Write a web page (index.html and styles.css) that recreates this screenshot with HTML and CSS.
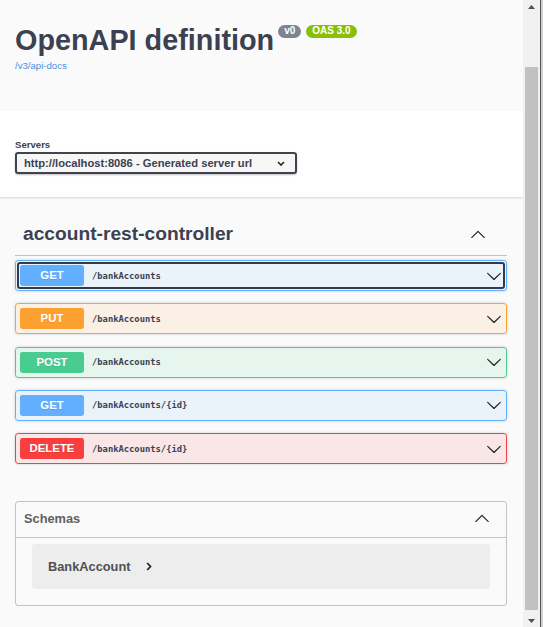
FILE: index.html
```html
<!DOCTYPE html>
<html lang="en">
<head>
<meta charset="utf-8">
<title>Swagger UI</title>
<link rel="stylesheet" href="styles.css">
</head>
<body>
<div class="app">
  <main class="page">
    <section class="info">
      <div class="title-row">
        <h2 class="title">OpenAPI definition</h2>
        <span class="badge badge-version">v0</span>
        <span class="badge badge-oas">OAS 3.0</span>
      </div>
      <a class="spec-link" href="#">/v3/api-docs</a>
    </section>

    <section class="scheme-container">
      <span class="servers-title">Servers</span>
      <div class="select">
        <span>http://localhost:8086 - Generated server url</span>
        <svg class="select-arrow" width="8" height="5" viewBox="0 0 8 5"><polyline points="1,1 4,4 7,1" fill="none" stroke="#222" stroke-width="1.6"/></svg>
      </div>
    </section>

    <section class="tag-section">
      <h3 class="tag">
        <span class="tag-name">account-rest-controller</span>
        <svg class="tag-arrow" width="16" height="16" viewBox="0 0 20 20"><path d="M17.418 14.908c.272.268.709.268.979 0s.271-.701 0-.969l-7.908-7.83c-.27-.268-.707-.268-.979 0l-7.908 7.83c-.27.268-.27.701 0 .969.271.268.709.268.979 0L10 7.767l7.418 7.141z" fill="#222"/></svg>
      </h3>

      <div class="opblock opblock-get">
        <div class="summary focused">
          <span class="method">GET</span>
          <span class="path">/bankAccounts</span>
          <svg class="op-arrow" width="16" height="16" viewBox="0 0 20 20"><path d="M17.418 6.109c.272-.268.709-.268.979 0s.271.701 0 .969l-7.908 7.83c-.27.268-.707.268-.979 0l-7.908-7.830c-.27-.268-.27-.701 0-.969.271-.268.709-.268.979 0L10 13.25l7.418-7.141z" fill="#222"/></svg>
        </div>
      </div>

      <div class="opblock opblock-put">
        <div class="summary">
          <span class="method">PUT</span>
          <span class="path">/bankAccounts</span>
          <svg class="op-arrow" width="16" height="16" viewBox="0 0 20 20"><path d="M17.418 6.109c.272-.268.709-.268.979 0s.271.701 0 .969l-7.908 7.83c-.27.268-.707.268-.979 0l-7.908-7.83c-.27-.268-.27-.701 0-.969.271-.268.709-.268.979 0L10 13.25l7.418-7.141z" fill="#222"/></svg>
        </div>
      </div>

      <div class="opblock opblock-post">
        <div class="summary">
          <span class="method">POST</span>
          <span class="path">/bankAccounts</span>
          <svg class="op-arrow" width="16" height="16" viewBox="0 0 20 20"><path d="M17.418 6.109c.272-.268.709-.268.979 0s.271.701 0 .969l-7.908 7.83c-.27.268-.707.268-.979 0l-7.908-7.83c-.27-.268-.27-.701 0-.969.271-.268.709-.268.979 0L10 13.25l7.418-7.141z" fill="#222"/></svg>
        </div>
      </div>

      <div class="opblock opblock-get">
        <div class="summary">
          <span class="method">GET</span>
          <span class="path">/bankAccounts/{id}</span>
          <svg class="op-arrow" width="16" height="16" viewBox="0 0 20 20"><path d="M17.418 6.109c.272-.268.709-.268.979 0s.271.701 0 .969l-7.908 7.83c-.27.268-.707.268-.979 0l-7.908-7.83c-.27-.268-.27-.701 0-.969.271-.268.709-.268.979 0L10 13.25l7.418-7.141z" fill="#222"/></svg>
        </div>
      </div>

      <div class="opblock opblock-delete">
        <div class="summary">
          <span class="method">DELETE</span>
          <span class="path">/bankAccounts/{id}</span>
          <svg class="op-arrow" width="16" height="16" viewBox="0 0 20 20"><path d="M17.418 6.109c.272-.268.709-.268.979 0s.271.701 0 .969l-7.908 7.83c-.27.268-.707.268-.979 0l-7.908-7.83c-.27-.268-.27-.701 0-.969.271-.268.709-.268.979 0L10 13.25l7.418-7.141z" fill="#222"/></svg>
        </div>
      </div>
    </section>

    <section class="models-wrap">
      <div class="models">
        <h4 class="models-title">
          <span>Schemas</span>
          <svg width="16" height="16" viewBox="0 0 20 20"><path d="M17.418 14.908c.272.268.709.268.979 0s.271-.701 0-.969l-7.908-7.83c-.27-.268-.707-.268-.979 0l-7.908 7.83c-.27.268-.27.701 0 .969.271.268.709.268.979 0L10 7.767l7.418 7.141z" fill="#222"/></svg>
        </h4>
        <div class="model-container">
          <span class="model-title">BankAccount</span>
          <svg class="model-toggle" width="6" height="9" viewBox="0 0 6 9"><polyline points="1.2,1 4.5,4.5 1.2,8" fill="none" stroke="#222" stroke-width="1.7"/></svg>
        </div>
      </div>
    </section>
  </main>

  <div class="scrollbar">
    <div class="sb-btn sb-up"><svg width="7" height="4" viewBox="0 0 7 4"><polygon points="0,4 3.5,0 7,4" fill="#505050"/></svg></div>
    <div class="sb-track"><div class="sb-thumb"></div></div>
    <div class="sb-btn sb-down"><svg width="7" height="4" viewBox="0 0 7 4"><polygon points="0,0 7,0 3.5,4" fill="#505050"/></svg></div>
  </div>
  <div class="edge"></div>
</div>
</body>
</html>
```

FILE: styles.css
```css
* { box-sizing: border-box; }

html, body {
  margin: 0;
  padding: 0;
}

body {
  background: #fafafa;
  font-family: "Liberation Sans", Arial, sans-serif;
  color: #3b4151;
  height: 627px;
  overflow: hidden;
}

.app {
  display: flex;
  height: 627px;
}

.page {
  width: 523px;
  flex: none;
  overflow: hidden;
}

/* info header */
.info {
  height: 111px;
  padding: 22px 16px 0 15px;
}

.title-row {
  display: flex;
  align-items: flex-start;
}

.title {
  margin: 0;
  font-size: 28.8px;
  line-height: 36px;
  font-weight: 700;
  color: #3b4151;
}

.badge {
  margin-top: 3px;
  margin-left: 5px;
  height: 12.5px;
  line-height: 12.5px;
  padding: 0 6px;
  border-radius: 7px;
  font-size: 10px;
  font-weight: 700;
  color: #fff;
}

.badge-version {
  margin-left: 4px;
  background: #7d8492;
}

.badge-oas {
  background: #89bf04;
}

.spec-link {
  display: block;
  margin-top: 2px;
  font-size: 9.6px;
  line-height: 12px;
  color: #4990e2;
  text-decoration: none;
}

/* servers */
.scheme-container {
  background: #fff;
  box-shadow: 0 1px 2px 0 rgba(0, 0, 0, 0.15);
  padding: 28px 16px 23px 15px;
  margin-bottom: 17px;
}

.servers-title {
  display: block;
  font-size: 9.6px;
  line-height: 12px;
  font-weight: 700;
}

.select {
  display: inline-flex;
  align-items: center;
  margin-top: 1px;
  border: 2px solid #41444e;
  border-radius: 3.2px;
  background: #f7f7f7;
  box-shadow: 0 1px 2px 0 rgba(0, 0, 0, 0.25);
  padding: 2.5px 10px 2.5px 7px;
  font-size: 11.2px;
  line-height: 13px;
  font-weight: 700;
  color: #3b4151;
}

.select-arrow {
  margin-left: 25px;
  flex: none;
}

/* tag */
.tag-section {
  padding: 0 16px 0 15px;
}

.tag {
  display: flex;
  align-items: center;
  margin: 0 0 4px;
  padding: 8px 16px 9px 8px;
  border-bottom: 1px solid rgba(59, 65, 81, 0.3);
  font-size: 19.2px;
  line-height: 24px;
  font-weight: 700;
  color: #3b4151;
}

.tag-name {
  flex: 1;
}

.tag-arrow {
  margin-right: 5px;
  flex: none;
}

/* operations */
.opblock {
  border: 1px solid;
  border-radius: 3.2px;
  margin-bottom: 12.25px;
  box-shadow: 0 0 3px rgba(0, 0, 0, 0.19);
}

.summary {
  display: flex;
  align-items: center;
  padding: 4px;
  border-radius: 3.2px;
}

.summary.focused {
  outline: 2px solid #343a48;
  outline-offset: -3px;
  border-radius: 4px;
}

.method {
  flex: none;
  width: 64px;
  height: 21px;
  line-height: 21px;
  text-align: center;
  font-size: 11.4px;
  font-weight: 700;
  color: #fff;
  border-radius: 2.4px;
  text-shadow: 0 1px 0 rgba(0, 0, 0, 0.1);
}

.path {
  flex: 1;
  padding: 0 8px;
  font-family: "DejaVu Sans Mono", "Liberation Mono", monospace;
  font-size: 8.8px;
  font-weight: 700;
  color: #3b4151;
}

.op-arrow {
  flex: none;
}

.opblock-get { border-color: #61affe; background: rgba(97, 175, 254, 0.1); }
.opblock-get .method { background: #61affe; }

.opblock-put { border-color: #fca130; background: rgba(252, 161, 48, 0.1); }
.opblock-put .method { background: #fca130; }

.opblock-post { border-color: #49cc90; background: rgba(73, 204, 144, 0.1); }
.opblock-post .method { background: #49cc90; }

.opblock-delete { border-color: #f93e3e; background: rgba(249, 62, 62, 0.1); }
.opblock-delete .method { background: #f93e3e; }

/* schemas */
.models-wrap {
  padding: 24.5px 16px 0 15px;
}

.models {
  border: 1px solid rgba(59, 65, 81, 0.3);
  border-radius: 3.2px;
}

.models-title {
  display: flex;
  align-items: center;
  justify-content: space-between;
  margin: 0;
  padding: 7px 16px 9px 8px;
  line-height: 19px;
  font-size: 12.8px;
  font-weight: 700;
  color: #606060;
  border-bottom: 1px solid rgba(59, 65, 81, 0.3);
}

.model-container {
  display: flex;
  align-items: center;
  margin: 6px 16px 16px;
  height: 45px;
  padding: 0 16px;
  border-radius: 3.2px;
  background: rgba(0, 0, 0, 0.05);
}

.model-title {
  font-size: 12.8px;
  font-weight: 700;
  color: #505050;
}

.model-toggle {
  margin-left: 16px;
}

/* scrollbar */
.scrollbar {
  width: 17px;
  flex: none;
  display: flex;
  flex-direction: column;
  background: #f1f1f1;
}

.sb-btn {
  height: 17px;
  flex: none;
  display: flex;
  justify-content: center;
  align-items: flex-start;
}

.sb-up { padding-top: 5px; }
.sb-down { padding-top: 9px; }

.sb-track {
  flex: 1;
  display: flex;
  flex-direction: column;
  padding-top: 50px;
}

.sb-thumb {
  flex: 1;
  margin: 0 2px;
  background: #c1c1c1;
}

.edge {
  width: 3px;
  flex: none;
  background: linear-gradient(to right, #555 0, #555 1px, #cbd3d5 1px, #cbd3d5 100%);
}
```
